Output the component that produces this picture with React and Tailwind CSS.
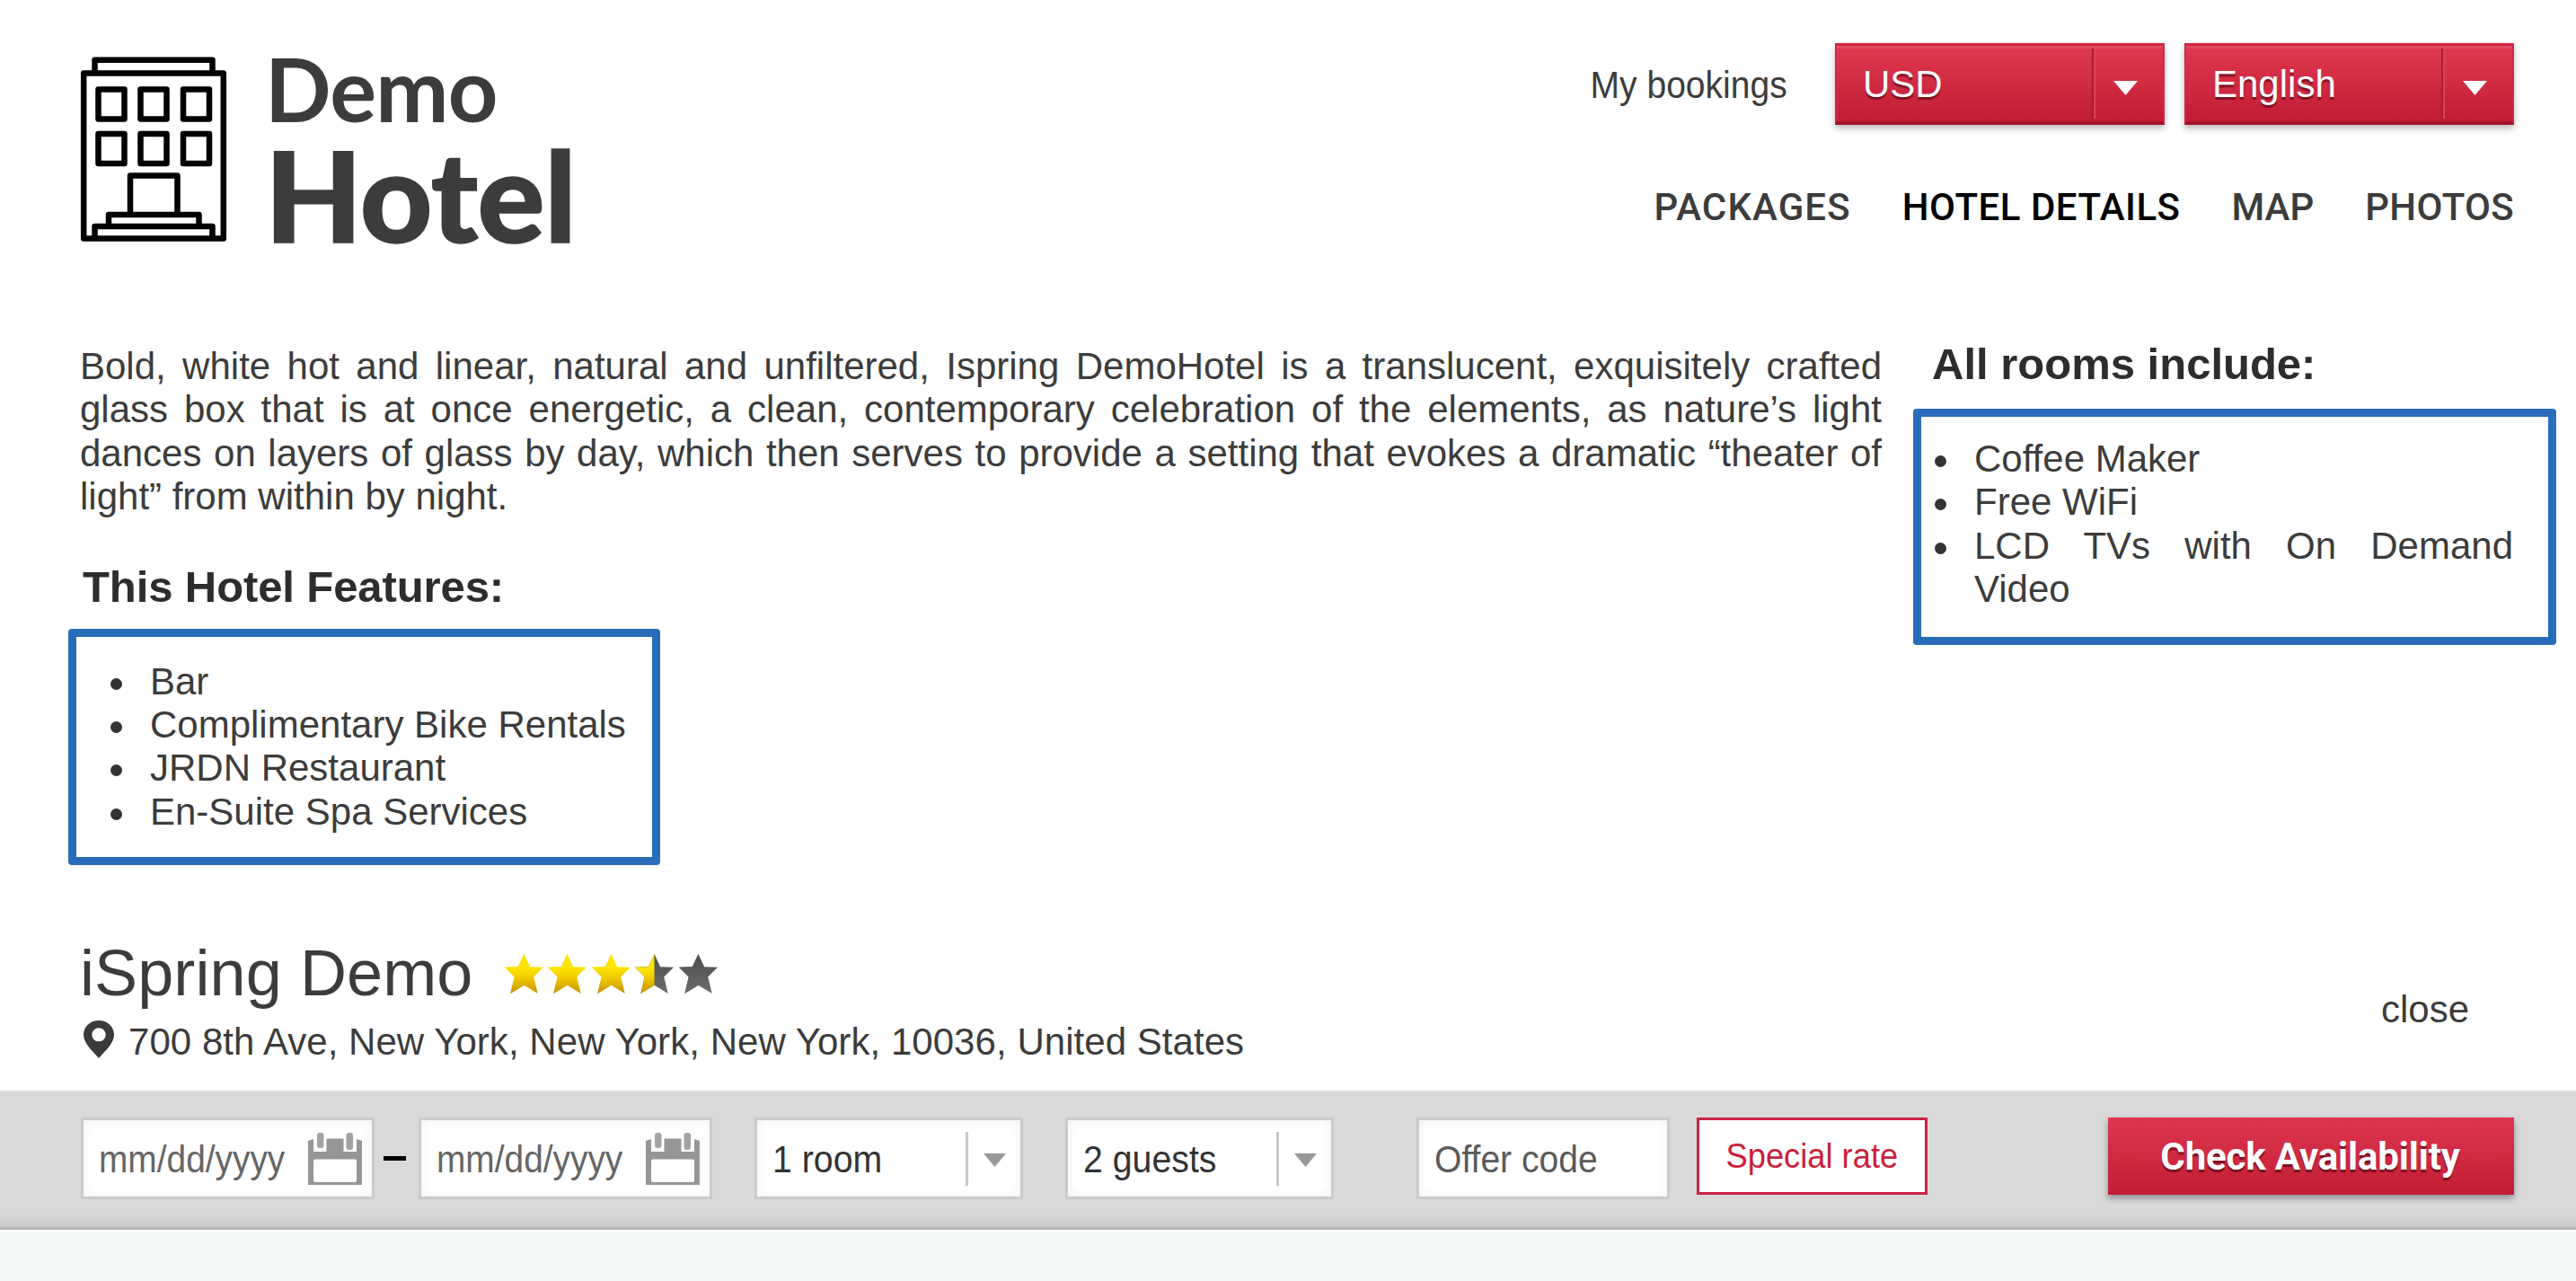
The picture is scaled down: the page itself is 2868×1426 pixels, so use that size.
function HotelIcon() {
  return (
    <svg className="h-[206px] w-[164px] shrink-0" viewBox="0 0 164 206" fill="none" stroke="#000" strokeWidth="6.5" strokeLinejoin="round">
      <rect x="4.2" y="18.500" width="155.6" height="184" />
      <path d="M16.5 18.500V3.700H147.5V18.500" />
      <rect x="20.5" y="36.500" width="29" height="33" />
      <rect x="67.5" y="36.500" width="29" height="33" />
      <rect x="115" y="36.500" width="29" height="33" />
      <rect x="20.5" y="86" width="29" height="33" />
      <rect x="67.5" y="86" width="29" height="33" />
      <rect x="115" y="86" width="29" height="33" />
      <path d="M56 176V132.5H108.5V176" />
      <path d="M32 189V176H132.5V189" />
      <path d="M16.5 202.500V189H147.5V202.500" />
    </svg>
  );
}

function Triangle({ className }) {
  return (
    <svg className={className} viewBox="0 0 27 16" fill="currentColor" preserveAspectRatio="none">
      <path d="M0 0H27L13.5 16Z" />
    </svg>
  );
}

function RedSelect({ label }) {
  return (
    <div className="flex h-[91px] w-[367px] items-center border-2 border-t-3 border-b-4 border-x-[#cf2844] border-t-[#d42643] border-b-[#a01229] bg-linear-to-b from-[#df3850] to-[#c21c36] shadow-[0_4px_7px_rgba(0,0,0,0.28),inset_0_3px_0_rgba(255,255,255,0.1)]">
      <span className="w-[284px] pt-px pl-[29px] text-white [text-shadow:0_3px_1px_rgba(70,0,10,0.55)]">{label}</span>
      <span className="h-[78px] w-[4px] border-r-2 border-l-2 border-l-[#a91a31] border-r-[#e0405a]" />
      <Triangle className="mt-[10px] ml-[20px] h-[16px] w-[27px] text-white" />
    </div>
  );
}

const STAR = "M22 0L28.8 14.2L44 14.8L33 25.4L37.6 44L22 34.8L6.4 44L11 25.4L0 14.8L15.2 14.2Z";

function Star({ fill }) {
  const left = fill === "none" ? "url(#grayStar)" : "url(#goldStar)";
  const right = fill === "full" ? "url(#goldStar)" : "url(#grayStar)";
  return (
    <svg className="h-[45px] w-[43px]" viewBox="0 0 44 45" preserveAspectRatio="none">
      <defs>
        <linearGradient id="goldStar" x1="0" y1="0" x2="0" y2="45" gradientUnits="userSpaceOnUse">
          <stop offset="0.35" stopColor="#ffe400" />
          <stop offset="0.6" stopColor="#f0c800" />
          <stop offset="1" stopColor="#c48e08" />
        </linearGradient>
        <linearGradient id="grayStar" x1="0" y1="0" x2="0" y2="45" gradientUnits="userSpaceOnUse">
          <stop offset="0" stopColor="#4e4e4e" />
          <stop offset="1" stopColor="#6c6c6c" />
        </linearGradient>
        <clipPath id="leftHalf"><rect x="0" y="0" width="22" height="45" /></clipPath>
      </defs>
      <path d={STAR} fill={right} />
      <path d={STAR} fill={left} clipPath="url(#leftHalf)" />
    </svg>
  );
}

function Bullets({ items, className }) {
  return (
    <div className={`rounded-[4px] border-[9px] border-[#296dba] ${className}`}>
      <ul className="leading-[48.4px]">
        {items.map((t) => (
          <li key={t} className="flex">
            <span className="mt-[20px] mr-[31px] size-[13px] shrink-0 rounded-full bg-[#333]" />
            <span className="grow text-justify">{t}</span>
          </li>
        ))}
      </ul>
    </div>
  );
}

function CalendarIcon() {
  return (
    <svg className="h-[58px] w-[60px]" viewBox="0 0 60 58" fill="#969696">
      <path fillRule="evenodd" d="M0 9L6 7V21H20.500V6.500H39.500V21H54V7L60 9V58H0ZM8 29.500Q6 29.500 6 31.500V53Q6 55 8 55H52Q54 55 54 53V31.500Q54 29.500 52 29.500Z" />
      <rect x="10" y="0" width="7.500" height="17" rx="3" fill="#a3a3a3" />
      <rect x="42.500" y="0" width="7.500" height="19" rx="3" fill="#a3a3a3" />
    </svg>
  );
}

function Field({ className, children }) {
  return (
    <div className={`flex h-[91px] items-center border-3 border-[#cbcbcb] bg-white shadow-[inset_0_0_12px_rgba(0,0,0,0.06)] ${className}`}>
      {children}
    </div>
  );
}

function DateField() {
  return (
    <Field className="w-[327px] justify-between pr-[11px] pl-[17px]">
      <span className="w-[224px] origin-left scale-x-[0.925] pt-[3px] whitespace-nowrap text-[#666]">mm/dd/yyyy</span>
      <CalendarIcon />
    </Field>
  );
}

function Dropdown({ label }) {
  return (
    <Field className="w-[299px]">
      <span className="w-[232px] pt-[3px] pl-[17px]">
        <span className="inline-block origin-left scale-x-[0.935] text-[#333]">{label}</span>
      </span>
      <span className="h-[60px] w-[2.500px] bg-[#c8c8c8]" />
      <Triangle className="mt-[4px] ml-[17px] h-[15px] w-[25px] text-[#999]" />
    </Field>
  );
}

export default function App() {
  return (
    <div className="flex h-[1426px] w-[2868px] flex-col overflow-hidden bg-white font-['Liberation_Sans',Arial,sans-serif] text-[42px] leading-[48px] text-[#3c3c3c]">
      <header className="flex h-[374px] shrink-0 justify-between pr-[69px] pl-[89px]">
        <div className="flex pt-[63px] font-['Lato',sans-serif] text-[#3c3c3c]">
          <HotelIcon />
          <div className="ml-[42px] flex flex-col items-start">
            <span className="-mt-[14px] text-[97px] leading-[100px] font-bold tracking-[-0.8px]">Demo</span>
            <span className="mt-[2px] text-[140px] leading-[130px] font-black tracking-[-0.4px] [-webkit-text-stroke:1.5px_#3c3c3c]">Hotel</span>
          </div>
        </div>
        <div className="flex flex-col items-end pt-[48px]">
          <div className="flex items-center">
            <span className="mr-[53px] origin-right scale-x-[0.93] pt-[3px]">My bookings</span>
            <RedSelect label="USD" />
            <span className="w-[22px]" />
            <RedSelect label="English" />
          </div>
          <nav className="mt-[67px] flex gap-[57px] font-['Roboto',sans-serif] leading-[50px] font-medium">
            <span className="tracking-[1.1px]">PACKAGES</span>
            <span className="tracking-[0.5px] text-black">HOTEL DETAILS</span>
            <span>MAP</span>
            <span className="tracking-[0.3px]">PHOTOS</span>
          </nav>
        </div>
      </header>

      <main className="flex h-[669px] shrink-0">
        <section className="w-[2130px] pt-[10px] pl-[76px]">
          <p className="ml-[13px] w-[2006px] text-justify leading-[48.4px]">
            Bold, white hot and linear, natural and unfiltered, Ispring DemoHotel is a translucent, exquisitely crafted glass box that is at once energetic, a clean, contemporary celebration of the elements, as nature’s light dances on layers of glass by day, which then serves to provide a setting that evokes a dramatic “theater of light” from within by night.
          </p>
          <h2 className="mt-[47px] ml-[16px] text-[49px] leading-[56px] font-bold tracking-[-0.1px] text-[#2d2d2d]">This Hotel Features:</h2>
          <Bullets
            className="mt-[19px] h-[263px] w-[659px] pt-[26px] pl-[38px]"
            items={["Bar", "Complimentary Bike Rentals", "JRDN Restaurant", "En-Suite Spa Services"]}
          />
        </section>
        <section className="pt-[3px]">
          <h2 className="ml-[21px] text-[49px] leading-[56px] font-bold text-[#2d2d2d]">All rooms include:</h2>
          <Bullets
            className="mt-[22px] h-[263px] w-[716px] pt-[23px] pr-[39px] pl-[15px]"
            items={["Coffee Maker", "Free WiFi", "LCD TVs with On Demand Video"]}
          />
        </section>
      </main>

      <section className="flex h-[171px] shrink-0 justify-between pr-[119px] pl-[88px]">
        <div>
          <div className="flex h-[80px] items-center">
            <h1 className="w-[474px] pl-px text-[72px] leading-[80px] tracking-[0.1px] whitespace-nowrap">iSpring Demo</h1>
            <div className="flex gap-[5.400px] pt-[2px]">
              <Star fill="full" />
              <Star fill="full" />
              <Star fill="full" />
              <Star fill="half" />
              <Star fill="none" />
            </div>
          </div>
          <div className="mt-[13px] flex">
            <svg className="ml-[5px] h-[42px] w-[34px]" viewBox="0 0 34 43" preserveAspectRatio="none" fill="#3a3a3a">
              <path fillRule="evenodd" d="M17 0C7 0 0 7.200 0 16.500C0 26 10 35 17 43C24 35 34 26 34 16.500C34 7.200 27 0 17 0ZM17 8.500A7.700 7.700 0 1 1 17 23.900A7.700 7.700 0 1 1 17 8.500Z" />
            </svg>
            <span className="ml-[16px] tracking-[0.05px]">700 8th Ave, New York, New York, New York, 10036, United States</span>
          </div>
        </div>
        <span className="mt-[57px]">close</span>
      </section>

      <section className="flex h-[155px] shrink-0 items-start border-t border-b-3 border-[#e4e4e4] border-b-[#b4b4b4] bg-[linear-gradient(to_bottom,#d9d9d9_90%,#c8c8c8_100%)] pt-[29px] pl-[90px]">
        <DateField />
        <span className="mt-[43px] ml-[10px] h-[5px] w-[25px] bg-black" />
        <span className="w-[14px]" />
        <DateField />
        <span className="w-[47px]" />
        <Dropdown label="1 room" />
        <span className="w-[47px]" />
        <Dropdown label="2 guests" />
        <Field className="ml-[92px] w-[282px] pl-[17px]">
          <span className="origin-left scale-x-[0.93] pt-[3px] whitespace-nowrap text-[#5a5a5a]">Offer code</span>
        </Field>
        <div className="ml-[30px] flex h-[86px] w-[257px] justify-center border-3 border-[#c92440] bg-white text-[38px] leading-[80px] text-[#c91f3c]">
          <span className="scale-x-[0.955] whitespace-nowrap">Special rate</span>
        </div>
        <div className="ml-[201px] h-[86px] w-[452px] bg-linear-to-b from-[#df3650] to-[#c21b35] pr-[2px] text-center font-['Roboto',sans-serif] leading-[87px] font-bold tracking-[-0.15px] text-white shadow-[0_4px_7px_rgba(0,0,0,0.35)] [text-shadow:0_3px_1px_rgba(70,0,10,0.6)]">Check Availability</div>
      </section>
      <footer className="grow border-t-2 border-[#f9fbfb] bg-[#f3f7f8]" />
    </div>
  );
}
